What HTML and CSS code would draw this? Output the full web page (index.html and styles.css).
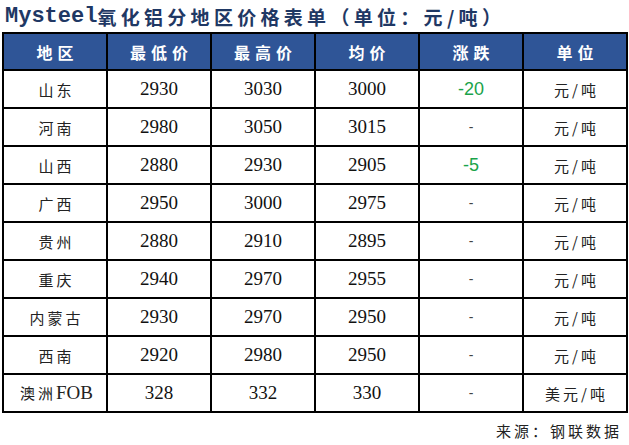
FILE: index.html
```html
<!DOCTYPE html>
<html lang="zh">
<head>
<meta charset="utf-8">
<link rel="stylesheet" href="styles.css">
</head>
<body>
<div class="page">
  <h1 class="title"><span class="brand">Mysteel</span>氧化铝分地区价格表单（单位：元/吨）</h1>
  <table class="price-table">
    <thead>
      <tr><th>地区</th><th>最低价</th><th>最高价</th><th>均价</th><th>涨跌</th><th>单位</th></tr>
    </thead>
    <tbody>
      <tr><td class="cn">山东</td><td>2930</td><td>3030</td><td>3000</td><td class="chg down">-20</td><td class="cn">元/吨</td></tr>
      <tr><td class="cn">河南</td><td>2980</td><td>3050</td><td>3015</td><td class="chg">-</td><td class="cn">元/吨</td></tr>
      <tr><td class="cn">山西</td><td>2880</td><td>2930</td><td>2905</td><td class="chg down">-5</td><td class="cn">元/吨</td></tr>
      <tr><td class="cn">广西</td><td>2950</td><td>3000</td><td>2975</td><td class="chg">-</td><td class="cn">元/吨</td></tr>
      <tr><td class="cn">贵州</td><td>2880</td><td>2910</td><td>2895</td><td class="chg">-</td><td class="cn">元/吨</td></tr>
      <tr><td class="cn">重庆</td><td>2940</td><td>2970</td><td>2955</td><td class="chg">-</td><td class="cn">元/吨</td></tr>
      <tr><td class="cn">内蒙古</td><td>2930</td><td>2970</td><td>2950</td><td class="chg">-</td><td class="cn">元/吨</td></tr>
      <tr><td class="cn">西南</td><td>2920</td><td>2980</td><td>2950</td><td class="chg">-</td><td class="cn">元/吨</td></tr>
      <tr><td class="cn">澳洲<span class="latin">FOB</span></td><td>328</td><td>332</td><td>330</td><td class="chg">-</td><td class="cn">美元/吨</td></tr>
    </tbody>
  </table>
  <div class="source">来源：钢联数据</div>
</div>
</body>
</html>
```
FILE: styles.css
```css
html, body {
  margin: 0;
  padding: 0;
  background: #fff;
}
.page {
  width: 629px;
  height: 445px;
  overflow: hidden;
}
.title {
  margin: 0;
  height: 32px;
  padding-left: 5px;
  display: flex;
  align-items: center;
  font-family: "Noto Sans CJK SC", sans-serif;
  font-weight: 700;
  font-size: 19px;
  letter-spacing: 4.3px;
  color: #1f3864;
  white-space: nowrap;
}
.brand {
  font-family: "Liberation Mono", monospace;
  font-size: 22px;
  letter-spacing: 0;
  font-weight: 700;
}
.price-table {
  margin: 0 0 0 2px;
  width: 626px;
  border-collapse: collapse;
  table-layout: fixed;
  font-family: "Liberation Serif", "Noto Sans CJK SC", serif;
  font-size: 19px;
  color: #111;
}
.price-table th,
.price-table td {
  border: 2px solid #000;
  text-align: center;
  padding: 0;
}
.price-table th {
  height: 35px;
  background: #2f5597;
  color: #fff;
  font-family: "Noto Sans CJK SC", sans-serif;
  font-weight: 700;
  font-size: 16px;
  letter-spacing: 5px;
  text-indent: 5px;
  border-color: #000;
}
.price-table td {
  height: 36px;
}
.price-table td.cn {
  font-family: "Noto Sans CJK SC", sans-serif;
  font-size: 15px;
  font-weight: 400;
  letter-spacing: 3px;
  text-indent: 3px;
  color: #222;
}
.latin {
  font-family: "Liberation Serif", serif;
  font-size: 19px;
  letter-spacing: 0;
}
.chg {
  font-family: "Liberation Sans", sans-serif;
  font-size: 14px;
  color: #444;
}
.chg.down {
  color: #1aa34a;
  font-size: 18px;
}
.source {
  text-align: right;
  padding-right: 7px;
  margin-top: 7px;
  font-family: "Noto Sans CJK SC", sans-serif;
  font-size: 15px;
  letter-spacing: 3px;
  color: #222;
}
```
